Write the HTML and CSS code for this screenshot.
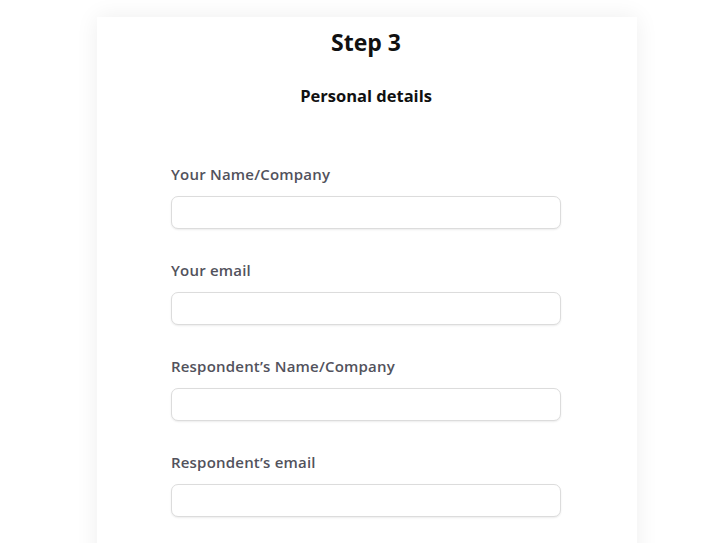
FILE: index.html
```html
<!DOCTYPE html>
<html lang="en">
<head>
<meta charset="utf-8">
<title>Step 3</title>
<link rel="stylesheet" href="styles.css">
</head>
<body>
<main class="card">
  <h1 class="step-title">Step 3</h1>
  <h2 class="section-title">Personal details</h2>
  <form class="form">
    <div class="field">
      <label class="label" for="name">Your Name/Company</label>
      <input class="input" id="name" type="text">
    </div>
    <div class="field">
      <label class="label" for="email">Your email</label>
      <input class="input" id="email" type="email">
    </div>
    <div class="field">
      <label class="label" for="rname">Respondent’s Name/Company</label>
      <input class="input" id="rname" type="text">
    </div>
    <div class="field">
      <label class="label" for="remail">Respondent’s email</label>
      <input class="input" id="remail" type="email">
    </div>
  </form>
</main>
</body>
</html>
```
FILE: styles.css
```css
* { box-sizing: border-box; }
html, body {
  margin: 0;
  padding: 0;
  background: #ffffff;
  height: 100%;
  overflow: hidden;
}
body {
  font-family: "Open Sans", "Noto Sans", sans-serif;
  color: #111;
}
.card {
  width: 540px;
  margin: 17px 0 0 97px;
  min-height: 600px;
  background: #fff;
  box-shadow: 0 0 22px rgba(0, 0, 0, 0.07);
  padding: 11px 76px 0 74px;
}
.step-title {
  margin: 0;
  text-align: center;
  font-size: 23px;
  line-height: 28px;
  font-weight: 700;
  color: #111;
}
.section-title {
  margin: 30px 0 0;
  text-align: center;
  font-size: 16.5px;
  line-height: 20px;
  font-weight: 700;
  color: #111;
}
.form {
  margin-top: 58px;
  display: flex;
  flex-direction: column;
  gap: 31px;
}
.field {
  display: flex;
  flex-direction: column;
  gap: 12px;
}
.label {
  font-size: 15px;
  line-height: 20px;
  font-weight: 600;
  letter-spacing: 0.2px;
  color: #52525c;
}
.input {
  width: 390px;
  height: 33px;
  border: 1px solid #dcdcdc;
  border-radius: 7px;
  background: #fff;
  box-shadow: 0 1px 2px rgba(0, 0, 0, 0.08);
  font: inherit;
  padding: 0 10px;
  outline: none;
}
```
